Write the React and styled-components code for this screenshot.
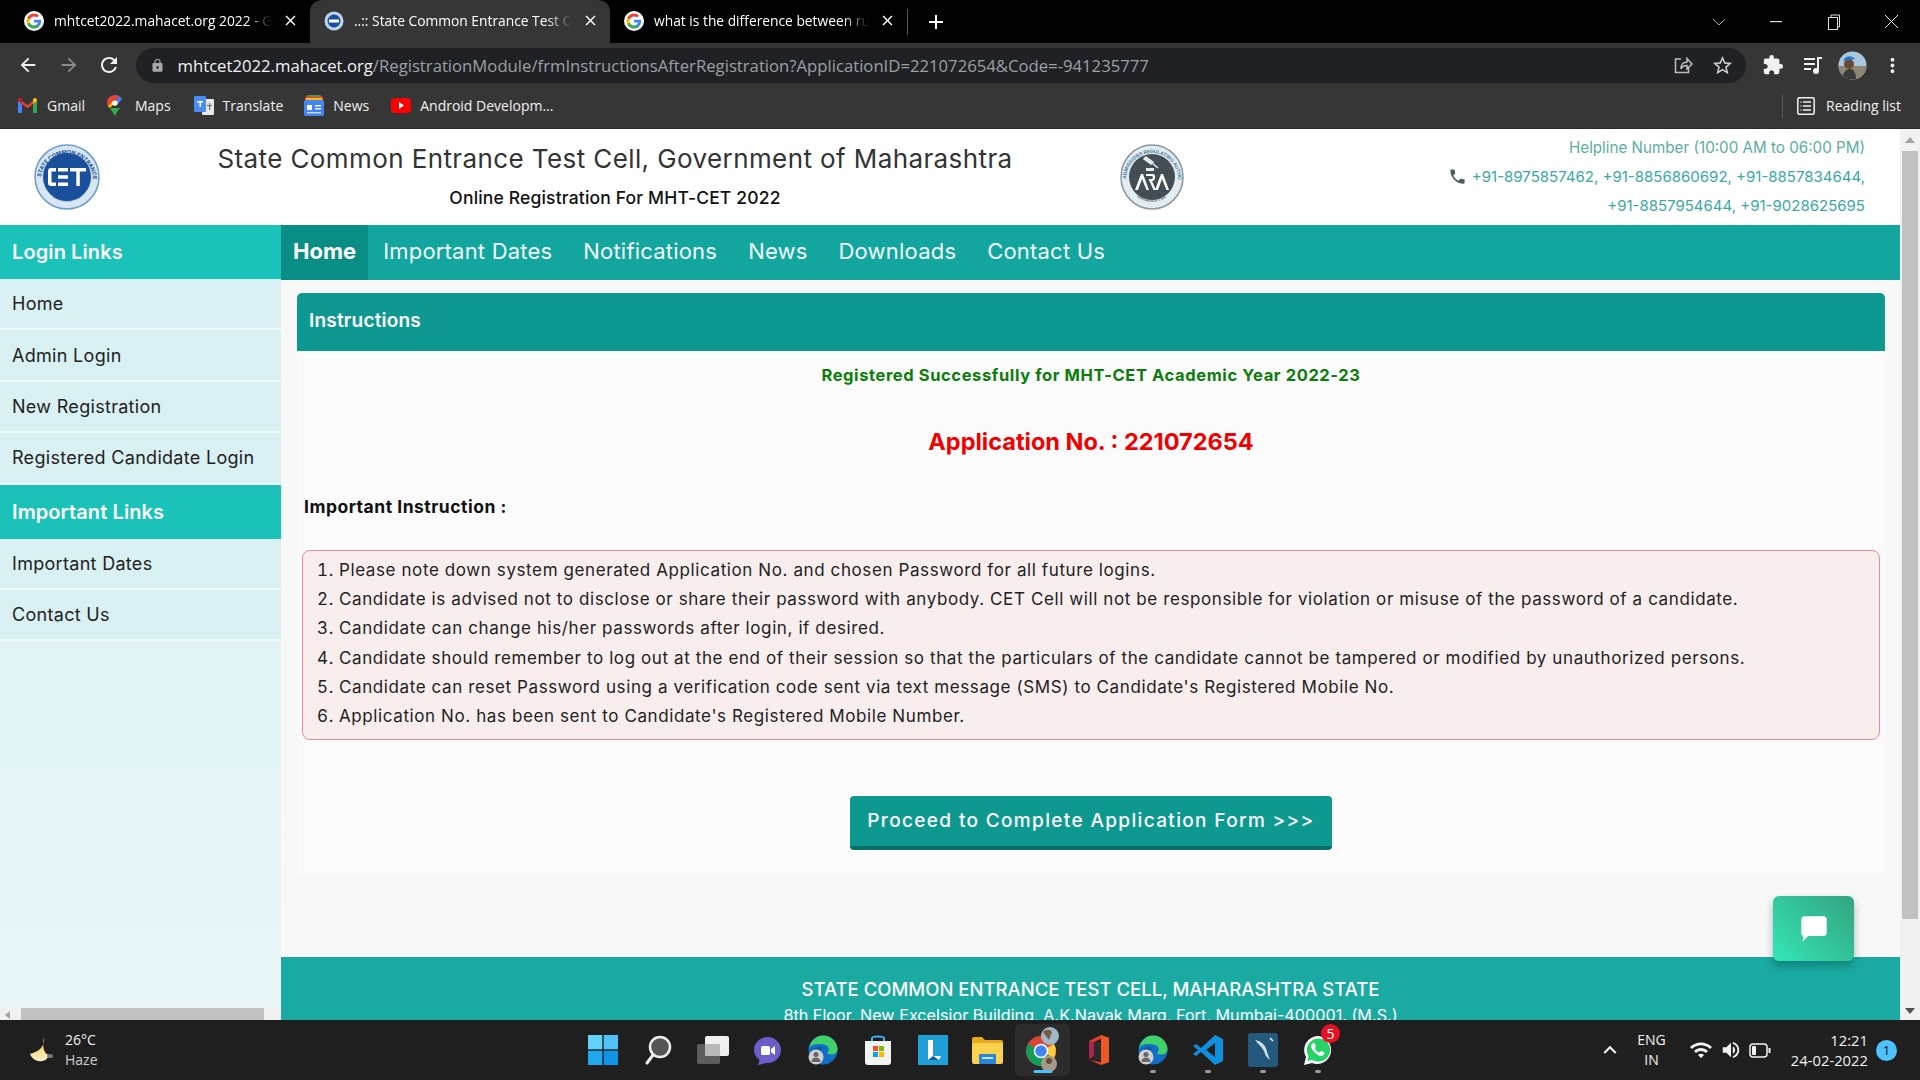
import React from "react";
import styled, { createGlobalStyle } from "styled-components";
import {
  MdArrowBack, MdArrowForward, MdRefresh, MdLock, MdStarBorder, MdMoreVert, MdExtension,
  MdClose, MdAdd, MdLocalPhone, MdWifi, MdVolumeUp, MdKeyboardArrowUp,
} from "react-icons/md";

const Global = createGlobalStyle`
  html, body { margin: 0; padding: 0; width: 1920px; height: 1080px; overflow: hidden; background: #000; }
  * { box-sizing: border-box; }
  svg { display: block; flex: none; }
`;
const ui = `"Open Sans", "Noto Sans", sans-serif`;
const web = `Inter, "Noto Sans", sans-serif`;

const Screen = styled.div`width:1920px;height:1080px;display:flex;flex-direction:column;overflow:hidden;position:relative;`;

/* browser chrome */
const TabStrip = styled.div`height:43px;background:#000;display:flex;align-items:stretch;padding-left:10px;flex:none;position:relative;`;
const Tab = styled.div`
  width:${p => p.$w || 300}px;display:flex;align-items:center;padding:0 11px 2px 14px;gap:10px;color:#fff;
  background:${p => p.$active ? "#363636" : "transparent"};border-radius:12px 12px 0 0;
  font:400 13.8px ${ui};
`;
const TabTitle = styled.span`
  flex:1;white-space:nowrap;overflow:hidden;
  -webkit-mask-image:linear-gradient(90deg,#000 88%,transparent 100%);mask-image:linear-gradient(90deg,#000 88%,transparent 100%);
`;
const TabSep = styled.div`width:1px;height:26px;background:#555;align-self:center;`;
const NewTab = styled.div`width:56px;display:flex;align-items:center;justify-content:center;color:#fff;`;
const WinControls = styled.div`margin-left:auto;display:flex;align-items:center;color:#ddd;`;
const WinBtn = styled.div`width:57.5px;height:36px;display:flex;align-items:center;justify-content:center;`;

const Toolbar = styled.div`height:44px;background:#363636;display:flex;align-items:center;flex:none;padding-left:8px;`;
const NavIcon = styled.div`width:40.5px;display:flex;justify-content:center;color:${p => p.$dim ? "#8a8a8a" : "#f1f1f1"};`;
const UrlBar = styled.div`
  margin-left:6px;width:1610px;height:35px;background:#202124;border-radius:18px;display:flex;align-items:center;padding:0 3px 0 14px;
  font:400 16.7px ${ui};color:#9aa0a6;
`;
const LockWrap = styled.div`color:#a8a8a8;margin-right:13px;`;
const Host = styled.span`color:#f1f3f4;`;
const UrlRest = styled.span`flex:1;white-space:nowrap;`;
const UrlAct = styled.div`width:40px;display:flex;justify-content:center;color:#cfcfcf;`;
const ToolRight = styled.div`display:flex;align-items:center;color:#f1f1f1;padding-left:7px;`;
const ToolIcon = styled.div`width:40px;display:flex;justify-content:center;`;

const Bookmarks = styled.div`height:42px;background:#363636;border-bottom:1px solid #2a2a2a;display:flex;align-items:center;flex:none;padding:0 0 4px 18px;font:400 14px ${ui};color:#f1f1f1;`;
const Mark = styled.div`display:flex;align-items:center;gap:${p => p.$gap}px;margin-right:${p => p.$mr || 0}px;white-space:nowrap;`;
const Reading = styled.div`margin-left:auto;display:flex;align-items:center;gap:11px;border-left:1px solid #5a5a5a;height:24px;padding:0 19px 0 14px;`;

/* page */
const Viewport = styled.div`flex:1;min-height:0;display:flex;background:#fff;`;
const Page = styled.div`flex:1;min-width:0;display:flex;flex-direction:column;`;
const Header = styled.header`height:96px;background:#fff;display:flex;align-items:center;flex:none;padding-left:34px;`;
const TitleBlock = styled.div`width:1010px;margin-left:10px;text-align:center;`;
const Title = styled.div`font:400 26px/1 ${web};letter-spacing:.4px;color:#333;margin-top:-1px;`;
const SubTitle = styled.div`font:500 17.5px/1 ${web};letter-spacing:.17px;color:#111;margin-top:17px;`;
const Help = styled.div`flex:1;text-align:right;padding-right:35px;font:400 15px/29px ${web};color:#3aa9a1;margin-top:-2px;`;
const HelpHead = styled.div`color:#5aaea0;font-size:15.2px;`;
const PhoneIcon = styled(MdLocalPhone)`display:inline-block;vertical-align:-4px;color:#4d5b60;margin-right:5px;`;

const Body = styled.div`flex:1;min-height:0;display:flex;`;
const Sidebar = styled.aside`width:281px;flex:none;background:linear-gradient(#d9f1f2,#e9f6f7);display:flex;flex-direction:column;`;
const SideHead = styled.div`height:54px;background:#1bc2b9;color:#fff;font:600 20px ${web};letter-spacing:.1px;display:flex;align-items:center;padding-left:12px;flex:none;`;
const SideItem = styled.div`height:51.4px;background:#d9f1f2;border-bottom:2px solid #f1fafa;color:#222;font:400 18px ${web};letter-spacing:.3px;display:flex;align-items:center;padding-left:12px;flex:none;`;
const HScroll = styled.div`margin-top:auto;height:12px;background:#f1f1f1;padding-left:21px;padding-right:17px;display:flex;position:relative;`;
const HThumb = styled.div`flex:1;background:#c1c1c1;`;
const HArrow = styled.div`position:absolute;left:5px;top:3px;border:4px solid transparent;border-left:0;border-right:5px solid #a3a3a3;`;

const Main = styled.main`flex:1;min-width:0;display:flex;flex-direction:column;background:#f8f8f8;overflow:hidden;`;
const Nav = styled.nav`height:55px;background:#13a69e;display:flex;flex:none;color:#f4fdfc;font:400 22px ${web};letter-spacing:.2px;`;
const NavItem = styled.div`
  display:flex;align-items:center;padding:0 ${p => p.$active ? 12 : 0}px 3px;margin-right:${p => p.$mr}px;
  ${p => p.$active && "background:#088e85;font-weight:700;color:#fff;letter-spacing:0;"}
`;
const Content = styled.div`height:677px;flex:none;padding:13px 15px 0 16px;`;
const Panel = styled.section`background:#fbfbfb;height:581px;border-radius:5px 5px 0 0;`;
const PanelHead = styled.div`height:58px;background:#0d9990;color:#fff;font:600 19px ${web};letter-spacing:.2px;display:flex;align-items:center;padding:0 0 3px 12px;border-radius:5px 5px 0 0;`;
const Success = styled.div`text-align:center;color:#0b7d0b;font:700 16.5px ${web};letter-spacing:.6px;margin-top:14px;line-height:20px;`;
const AppNo = styled.div`text-align:center;color:#f00000;font:700 23.5px ${web};margin-top:42px;line-height:30px;`;
const ImpHead = styled.div`color:#111;font:700 17.5px ${web};letter-spacing:.5px;margin:40px 0 0 7px;line-height:20px;`;
const Alert = styled.ol`
  margin:33px 5px 0 5px;padding:5px 0 0 36px;height:190px;border:1px solid #f08a96;border-radius:8px;background:#f8eeee;
  color:#222;font:400 17px/29.2px ${web};letter-spacing:.6px;
`;
const BtnRow = styled.div`display:flex;justify-content:center;margin-top:56px;`;
const Btn = styled.button`
  width:482px;height:54px;border:0;border-bottom:4px solid #086e67;border-radius:4px;background:#0d9990;color:#fff;
  font:500 19px ${web};letter-spacing:1.35px;padding:0 0 2px;
`;
const Footer = styled.footer`flex:1;background:#1aaaa2;color:#fff;text-align:center;overflow:hidden;padding-top:20px;`;
const FootTitle = styled.div`font:500 18.5px/24px ${web};`;
const FootAddr = styled.div`font:400 16.2px/24px ${web};margin-top:2px;`;

const Chat = styled.div`
  position:absolute;left:1773px;top:896px;width:81px;height:65px;border-radius:6px;
  background:linear-gradient(45deg,#33e6b4,#34a382);box-shadow:0 5px 9px rgba(0,60,50,.35);
  display:flex;align-items:center;justify-content:center;
`;
const VScroll = styled.div`width:20px;flex:none;background:#f1f1f1;display:flex;flex-direction:column;align-items:center;`;
const VArrow = styled.div`height:22px;display:flex;align-items:center;justify-content:center;flex:none;${p => p.$end && "margin-top:auto;height:18px;"}`;
const VThumb = styled.div`width:16px;height:768px;background:#c1c1c1;flex:none;`;
const UpTri = styled.div`border:5px solid transparent;border-top:0;border-bottom:6px solid #a3a3a3;`;
const DownTri = styled.div`border:5px solid transparent;border-bottom:0;border-top:6px solid #505050;`;

/* taskbar */
const Taskbar = styled.div`height:60px;background:#1f1f1f;flex:none;display:grid;grid-template-columns:1fr auto 1fr;align-items:center;color:#f2f2f2;font:400 14px ${ui};`;
const Weather = styled.div`display:flex;align-items:center;gap:10px;padding-left:27px;`;
const WeatherText = styled.div`line-height:20px;font-size:14px;`;
const HazeLine = styled.div`color:#cfcfcf;`;
const Dock = styled.div`display:flex;align-items:center;`;
const DockItem = styled.div`
  width:55px;height:52px;display:flex;align-items:center;justify-content:center;position:relative;
  ${p => p.$active && "background:#2c2c2c;border-radius:5px;"}
`;
const Dot = styled.div`position:absolute;bottom:3px;left:50%;transform:translateX(-50%);height:3.5px;border-radius:2px;width:${p => p.$active ? 19 : 6}px;background:${p => p.$active ? "#4cc2ff" : "#9a9a9a"};`;
const Badge = styled.div`position:absolute;right:5px;top:0;width:19px;height:19px;border-radius:50%;background:#e81123;color:#fff;font:400 14px/19px ${ui};text-align:center;`;
const Tray = styled.div`display:flex;align-items:center;justify-content:flex-end;padding-right:23px;`;
const Lang = styled.div`text-align:center;line-height:20px;margin:0 23px 0 14px;font-size:14px;`;
const TrayIcons = styled.div`display:flex;align-items:center;gap:7px;margin-right:20px;`;
const Clock = styled.div`text-align:right;line-height:20px;font-size:14.8px;`;
const Notif = styled.div`width:21px;height:21px;border-radius:50%;background:#4cc2ff;color:#111;margin-left:8px;text-align:center;font:400 13px/21px ${ui};`;

/* drawn logos */
const G = () => (
  <svg width="20" height="20" viewBox="0 0 48 48">
    <circle cx="24" cy="24" r="24" fill="#fff"/>
    <path fill="#4285F4" d="M41 24.5c0-1.3-.1-2.300-.3-3.500H24v6.500h9.700c-.4 2.200-1.700 4.100-3.600 5.300v4.400h5.800c3.400-3.100 5.100-7.600 5.100-12.700z"/>
    <path fill="#34A853" d="M24 42c4.900 0 8.900-1.600 11.900-4.400l-5.800-4.400c-1.600 1.100-3.700 1.700-6.100 1.700-4.700 0-8.700-3.200-10.100-7.400H7.900v4.600C10.900 37.900 17 42 24 42z"/>
    <path fill="#FBBC05" d="M13.900 27.500c-.4-1.100-.6-2.300-.6-3.500s.2-2.400.6-3.500v-4.600h-6C6.700 18.300 6 21.100 6 24s.7 5.700 1.900 8.100l6-4.600z"/>
    <path fill="#EA4335" d="M24 13.100c2.600 0 5 .9 6.800 2.700l5.100-5.100C32.900 7.900 28.900 6 24 6 17 6 10.900 10.100 7.900 15.900l6 4.600c1.400-4.200 5.400-7.400 10.100-7.400z"/>
  </svg>
);
const CetFav = () => (
  <svg width="20" height="20" viewBox="0 0 20 20">
    <circle cx="10" cy="10" r="9.500" fill="#bcd4ec"/><circle cx="10" cy="10" r="6.500" fill="#1a4f9c"/><rect x="5" y="8.500" width="10" height="3" fill="#fff"/>
  </svg>
);
const CetLogo = () => (
  <svg width="66" height="66" viewBox="0 0 66 66">
    <defs><path id="cetArc" d="M7 36a26 26 0 1 1 52 0"/><path id="cetBot" d="M14 49a25 25 0 0 0 38 0"/></defs>
    <circle cx="33" cy="33" r="32" fill="#d6e6f3" stroke="#6d9cc8" strokeWidth="1.500"/>
    <circle cx="33" cy="33" r="24" fill="#1a4f9c"/>
    <text fill="#1a4f9c" fontSize="5.500" fontWeight="700" fontFamily="Inter"><textPath href="#cetArc" startOffset="3">STATE COMMON ENTRANCE TEST CELL</textPath></text>
    <text fill="#1a4f9c" fontSize="4" fontFamily="Inter"><textPath href="#cetBot" startOffset="6">MAHARASHTRA</textPath></text>
    <path d="M22 24h-5a3 3 0 0 0-3 3v12a3 3 0 0 0 3 3h5v-3.500h-4.500v-11H22zM24 24h10v3.500H24zM24 31.300h10v3.400H24zM24 38.500h10V42H24zM36 24h16v3.500h-6.200V42h-3.500V27.500H36z" fill="#fff"/>
  </svg>
);
const AraLogo = () => (
  <svg width="64" height="66" viewBox="0 0 64 66">
    <defs><path id="araArc" d="M6 36a26 27 0 1 1 52 0"/><path id="araBot" d="M14 50a24 24 0 0 0 36 0"/></defs>
    <ellipse cx="32" cy="33" rx="31" ry="32" fill="#e3ecf1" stroke="#8a979e" strokeWidth="1.500"/>
    <circle cx="32" cy="33" r="23" fill="#434e55"/>
    <text fill="#4a7ea4" fontSize="4.800" fontWeight="700" fontFamily="Inter"><textPath href="#araArc" startOffset="1">ADMISSIONS REGULATING AUTHORITY</textPath></text>
    <text fill="#434e55" fontSize="4" fontFamily="Inter"><textPath href="#araBot" startOffset="4">MAHARASHTRA</textPath></text>
    <path d="M26 13l7 5-2 2-7-5zM31 18l7 6" stroke="#e3ecf1" strokeWidth="1.500" fill="#e3ecf1"/><rect x="26" y="24" width="8" height="3" fill="#e3ecf1"/>
    <path d="M15 46l6-16h2l6 16h-2.500L22 35l-4 11zM35 46l6-16h2l6 16h-2.500L42 35l-4 11z" fill="#fff"/><path d="M26 30h7c3 0 3 7-1 7l4 9h-2.500l-4-9H29v-2h3c1 0 1-3 0-3h-6z" fill="#fff"/>
  </svg>
);
const Gmail = () => (
  <svg width="19" height="15" viewBox="0 0 19 15">
    <path fill="#4285F4" d="M0 2v12a1 1 0 0 0 1 1h3V6z"/><path fill="#34A853" d="M19 2v12a1 1 0 0 1-1 1h-3V6z"/>
    <path fill="#EA4335" d="M4 6v-3l5.500 4.200L15 3v3l-5.500 4.200z"/><path fill="#C5221F" d="M0 2c0-1.800 2-2.500 3.200-1.600L4 1v5L0 3z"/><path fill="#FBBC05" d="M19 2c0-1.800-2-2.500-3.200-1.600L15 1v5l4-3z"/>
  </svg>
);
const MapsI = () => (
  <svg width="16" height="21" viewBox="0 0 16 21">
    <path fill="#34A853" d="M3 13l5 8c1-3 3-5 5-8z"/><path fill="#4285F4" d="M8 0c3 0 5 1.500 7 4l-4 5z"/><path fill="#EA4335" d="M8 0C4 0 0 3 0 8c0 1 .5 2.500 1 3l5-5c1-1 2-2 5-2l1-2z"/><path fill="#FBBC05" d="M1 11c.5 1 1 1.500 2 2l5-5-2-2z"/><circle cx="8" cy="8" r="2.700" fill="#fff"/>
  </svg>
);
const TranslateI = () => (
  <svg width="20" height="20" viewBox="0 0 20 20">
    <rect x="8" y="3" width="12" height="16" fill="#e8e8e8" rx="1"/><rect x="0" y="0" width="12" height="16" fill="#4a8af4" rx="1"/>
    <rect x="3" y="5" width="6" height="1.600" fill="#fff"/><rect x="5.500" y="5" width="1.500" height="6" fill="#fff"/><rect x="13" y="9" width="5" height="1.200" fill="#777"/><rect x="15" y="7" width="1.200" height="7" fill="#777"/>
  </svg>
);
const NewsI = () => (
  <svg width="20" height="21" viewBox="0 0 20 21">
    <rect x="3" y="0" width="14" height="6" fill="#34A853" rx="1"/><rect x="1" y="1.500" width="18" height="6" fill="#EA4335" rx="1"/><rect x="2" y="3" width="16" height="5" fill="#FBBC05"/>
    <rect x="0" y="5" width="20" height="16" fill="#4285F4" rx="1.500"/><rect x="3" y="10" width="5" height="5" fill="#fff"/><rect x="11" y="10" width="6" height="1.400" fill="#fff"/><rect x="11" y="13" width="6" height="1.400" fill="#fff"/><rect x="3" y="17" width="14" height="1.400" fill="#cfe0fb"/>
  </svg>
);
const YT = () => (
  <svg width="20" height="15" viewBox="0 0 20 15"><rect width="20" height="15" rx="4" fill="#f00"/><path d="M8 4l5 3.500-5 3.500z" fill="#fff"/></svg>
);
const ReadI = () => (
  <svg width="18" height="18" viewBox="0 0 18 18" fill="none" stroke="#f1f1f1" strokeWidth="1.500">
    <rect x=".8" y=".8" width="16.400" height="16.400" rx="1.500"/><path d="M6 5h8M6 9h8M6 13h8M3.500 5h1M3.500 9h1M3.500 13h1"/>
  </svg>
);
const ShareI = () => (
  <svg width="20" height="20" viewBox="0 0 20 20" fill="none" stroke="#bdbdbd" strokeWidth="1.500">
    <path d="M8 4H2.500v13.500h13V13"/><path d="M8 14c0-5 3-7 6-7V3.500l5 5.500-5 5v-3.500c-3 0-5 1-6 3.500z"/>
  </svg>
);
const MediaI = () => (
  <svg width="20" height="20" viewBox="0 0 20 20" fill="#f1f1f1">
    <rect x="1" y="3" width="11" height="2"/><rect x="1" y="8" width="11" height="2"/><rect x="1" y="13" width="7" height="2"/><rect x="14" y="2" width="2" height="13"/><rect x="14" y="2" width="5" height="2"/><circle cx="13" cy="16" r="3"/>
  </svg>
);
const Avatar = () => (
  <svg width="29" height="29" viewBox="0 0 29 29">
    <clipPath id="avc"><circle cx="14.500" cy="14.500" r="14"/></clipPath>
    <g clipPath="url(#avc)"><rect width="29" height="29" fill="#a9c8de"/><rect y="15" width="29" height="14" fill="#8d8672"/><circle cx="11" cy="13" r="5" fill="#6a4a35"/><path d="M5 10c2-6 9-6 12-2z" fill="#2a78c4"/><path d="M4 29c0-7 4-11 8-11s6 4 6 11z" fill="#3a3a3a"/></g>
  </svg>
);
const MoonI = () => (
  <svg width="28" height="28" viewBox="0 0 28 28">
    <defs><linearGradient id="moon" x1="0" y1="0" x2="0" y2="1"><stop offset="0" stopColor="#f5c33c"/><stop offset="1" stopColor="#fff2c8"/></linearGradient></defs>
    <path d="M17 1c1 8-3 14-14 17 2 5 7 8 12 7 4-.5 6-3 7-6-5-1-7-8-5-18z" fill="url(#moon)"/><ellipse cx="23" cy="20" rx="3" ry="2" fill="#777"/>
  </svg>
);
const Win = () => (
  <svg width="30" height="30" viewBox="0 0 30 30"><rect width="14.300" height="14.300" fill="#62d2f8"/><rect x="15.700" width="14.300" height="14.300" fill="#4fc3f7"/><rect y="15.700" width="14.300" height="14.300" fill="#1fa8ee"/><rect x="15.700" y="15.700" width="14.300" height="14.300" fill="#0f95e6"/></svg>
);
const SearchI = () => (
  <svg width="30" height="30" viewBox="0 0 30 30" fill="none"><circle cx="17" cy="12" r="10" fill="#555" stroke="#eee" strokeWidth="2.500"/><path d="M10 20l-6 8" stroke="#eee" strokeWidth="3" strokeLinecap="round"/></svg>
);
const TaskView = () => (
  <svg width="32" height="28" viewBox="0 0 32 28"><rect y="8" width="23" height="20" rx="2" fill="#5d5d5d"/><rect x="8" width="24" height="20" rx="2" fill="#f0f0f0"/><rect x="8" y="8" width="15" height="12" fill="#b8b8b8"/></svg>
);
const Teams = () => (
  <svg width="29" height="29" viewBox="0 0 29 29"><path d="M14.500 1C22 1 28 7 28 14s-6 13-13.500 13c-3 0-7 2-10 2 1-1.500 2-3 2-5C3 21 1 18 1 14 1 7 7 1 14.500 1z" fill="#6a5fc9"/><rect x="8" y="10" width="9" height="9" rx="1.500" fill="#fff"/><path d="M18 13l4-3v9l-4-3z" fill="#fff"/></svg>
);
const Edge = () => (
  <svg width="30" height="30" viewBox="0 0 30 30">
    <circle cx="15" cy="15" r="14.500" fill="#1070c8"/><path d="M1 13C3 5 9 .5 15 .5c8 0 14 6 14.500 13 .2 4-3 6-6.500 6-2 0-4-1-4-2 3-1 3-7-3.500-8C9 8.500 4 9 1 13z" fill="#42d06a"/><path d="M12 29c-5-1-9-5-10-10 2-6 9-9 14-6-5 0-7 8-4 16z" fill="#0c59a4"/>
    <circle cx="8" cy="22" r="7.500" fill="#cfcfcf"/><circle cx="8" cy="19.500" r="2.500" fill="#666"/><path d="M3.500 27c0-3 2-4.500 4.500-4.500s4.500 1.500 4.500 4.500z" fill="#666"/>
  </svg>
);
const Store = () => (
  <svg width="28" height="30" viewBox="0 0 28 30"><path d="M8 7V3c0-2 12-2 12 0v4" fill="none" stroke="#3ab4f2" strokeWidth="2"/><path d="M1 6h26v21a3 3 0 0 1-3 3H4a3 3 0 0 1-3-3z" fill="#f3f3f3"/><rect x="9" y="11" width="5" height="5" fill="#f25022"/><rect x="15" y="11" width="5" height="5" fill="#7fba00"/><rect x="9" y="17" width="5" height="5" fill="#00a4ef"/><rect x="15" y="17" width="5" height="5" fill="#ffb900"/></svg>
);
const LApp = () => (
  <svg width="30" height="30" viewBox="0 0 30 30"><rect width="30" height="30" fill="#1e9fd8"/><path d="M10 5h5v16h8l-2 4H10z" fill="#fff"/><path d="M15 21l6 4H10z" fill="#0c5f9c"/></svg>
);
const Folder = () => (
  <svg width="31" height="28" viewBox="0 0 31 28"><path d="M0 3a2 2 0 0 1 2-2h8l3 3h16a2 2 0 0 1 2 2v4H0z" fill="#e8a91a"/><rect y="7" width="31" height="21" rx="2" fill="#fbd24e"/><rect x="7" y="18" width="17" height="10" rx="1" fill="#2a86d8"/><rect x="10" y="21" width="11" height="2" fill="#c8e4fb"/></svg>
);
const ChromeStack = () => (
  <svg width="34" height="46" viewBox="0 0 34 46">
    <circle cx="15" cy="24" r="15" fill="#db4437"/><path d="M15 24l13 7a15 15 0 0 1-13 8 15 15 0 0 1-13-8z" fill="#0f9d58"/><path d="M15 24l-13 7a15 15 0 0 1 0-14z" fill="#0f9d58"/><path d="M15 24l13-7a15 15 0 0 1 0 14z" fill="#ffcd40"/><circle cx="15" cy="24" r="6.500" fill="#4285f4" stroke="#fff" strokeWidth="1.500"/>
    <circle cx="24" cy="9" r="9" fill="#9fb8c6"/><path d="M17 5c3-3 7-3 9 0l-3 8z" fill="#7a5a40"/><circle cx="23" cy="37" r="8" fill="#a59a85"/><circle cx="23" cy="34" r="3" fill="#6a4a35"/>
  </svg>
);
const Office = () => (
  <svg width="24" height="30" viewBox="0 0 24 30"><path d="M3 6l12-6 8 3v24l-8 3-12-5 12 2V4L8 7v14l-5 3z" fill="#d83b2b"/><path d="M3 6l5 1v14l-5 3z" fill="#a9254d"/><path d="M15 0l8 3v24l-8 3z" fill="#eb5a24"/><rect x="8" y="7" width="7" height="18" fill="#2a2a2a"/></svg>
);
const VSCode = () => (
  <svg width="30" height="30" viewBox="0 0 30 30"><path d="M22 0l8 4v22l-8 4L8 17l-5 4-3-2 5-4-5-4 3-2 5 4z" fill="#0f8fe0"/><path d="M22 8v14l-9-7z" fill="#1f1f1f"/></svg>
);
const MySql = () => (
  <svg width="30" height="34" viewBox="0 0 30 34"><rect width="30" height="34" rx="3" fill="#24597e"/><path d="M7 7c6 1 11 5 12 12l3 8c-3-2-5-5-6-9-2-4-6-7-9-11z" fill="#cfdfe9"/><path d="M22 5l3 3" stroke="#fff" strokeWidth="1.500"/></svg>
);
const WhatsApp = () => (
  <svg width="30" height="32" viewBox="0 0 30 32"><path d="M15 2a14 14 0 0 0-12 21L1 31l8-2A14 14 0 1 0 15 2z" fill="#fff"/><path d="M15 4.500A11.500 11.500 0 0 0 5.500 22l-1 5 5-1.300A11.500 11.500 0 1 0 15 4.500z" fill="#25d366"/><path d="M10 9c2-1 3 3 2.500 4-.5.700-1 1 0 2.500 1 1.500 2.500 2.500 3.500 3 1 .3 1.500-1 2-1.500 1-.5 4 1.500 3.500 2.500-1 2.500-4 3-6.500 1.500-3-1.500-6-5-7-8-.2-1.500.5-3.500 2.500-4z" fill="#fff"/></svg>
);
const BatteryI = () => (
  <svg width="22" height="15" viewBox="0 0 22 15" fill="none"><rect x="1" y="1" width="17" height="13" rx="3" stroke="#f2f2f2" strokeWidth="1.500"/><rect x="3" y="3" width="4" height="9" rx="1" fill="#f2f2f2"/><rect x="19.500" y="5" width="2" height="5" fill="#f2f2f2"/></svg>
);
const RestoreI = () => (
  <svg width="14" height="16" viewBox="0 0 14 16" fill="none" stroke="#ddd"><rect x="1.500" y="3.500" width="9" height="12"/><path d="M4 3.500V1h8.500v12H10.500"/></svg>
);
const ThinChevron = () => <svg width="14" height="8" viewBox="0 0 14 8" fill="none" stroke="#aaa"><path d="M1 1l6 6 6-6"/></svg>;
const ThinClose = () => <svg width="15" height="15" viewBox="0 0 15 15" fill="none" stroke="#e4e4e4"><path d="M1 1l13 13M14 1L1 14"/></svg>;
const ChatI = () => (
  <svg width="30" height="30" viewBox="0 0 26 26"><path d="M5 2h16a3 3 0 0 1 3 3v11a3 3 0 0 1-3 3H8l-5 5c.5-2 .8-4 .8-5H4a2 2 0 0 1-2-2V5a3 3 0 0 1 3-3z" fill="#fff"/></svg>
);
const MinI = () => <svg width="12" height="2"><rect width="12" height="1.200" fill="#ddd"/></svg>;

const dock = [
  [Win], [SearchI], [TaskView], [Teams], [Edge], [Store], [LApp], [Folder],
  [ChromeStack, "active"], [Office], [Edge, "dot"], [VSCode, "dot"], [MySql, "dot"], [WhatsApp, "dot", "5"],
];
const navItems = [["Important Dates", 31], ["Notifications", 31], ["News", 31], ["Downloads", 31], ["Contact Us", 0]];
const rules = [
  "Please note down system generated Application No. and chosen Password for all future logins.",
  "Candidate is advised not to disclose or share their password with anybody. CET Cell will not be responsible for violation or misuse of the password of a candidate.",
  "Candidate can change his/her passwords after login, if desired.",
  "Candidate should remember to log out at the end of their session so that the particulars of the candidate cannot be tampered or modified by unauthorized persons.",
  "Candidate can reset Password using a verification code sent via text message (SMS) to Candidate's Registered Mobile No.",
  "Application No. has been sent to Candidate's Registered Mobile Number.",
];

export default function App() {
  return (
    <Screen>
      <Global />
      <TabStrip>
        <Tab><G /><TabTitle>mhtcet2022.mahacet.org 2022 - Google Search</TabTitle><MdClose size={17} /></Tab>
        <Tab $active><CetFav /><TabTitle>..:: State Common Entrance Test Cell</TabTitle><MdClose size={17} /></Tab>
        <Tab $w={297}><G /><TabTitle>what is the difference between runtime</TabTitle><MdClose size={17} /></Tab>
        <TabSep />
        <NewTab><MdAdd size={24} /></NewTab>
        <WinControls>
          <WinBtn><ThinChevron /></WinBtn>
          <WinBtn><MinI /></WinBtn>
          <WinBtn><RestoreI /></WinBtn>
          <WinBtn><ThinClose /></WinBtn>
        </WinControls>
      </TabStrip>
      <Toolbar>
        <NavIcon><MdArrowBack size={22} /></NavIcon>
        <NavIcon $dim><MdArrowForward size={22} /></NavIcon>
        <NavIcon><MdRefresh size={24} /></NavIcon>
        <UrlBar>
          <LockWrap><MdLock size={15} /></LockWrap>
          <UrlRest><Host>mhtcet2022.mahacet.org</Host>/RegistrationModule/frmInstructionsAfterRegistration?ApplicationID=221072654&amp;Code=-941235777</UrlRest>
          <UrlAct><ShareI /></UrlAct>
          <UrlAct><MdStarBorder size={23} /></UrlAct>
        </UrlBar>
        <ToolRight>
          <ToolIcon><MdExtension size={22} /></ToolIcon>
          <ToolIcon><MediaI /></ToolIcon>
          <ToolIcon><Avatar /></ToolIcon>
          <ToolIcon><MdMoreVert size={23} /></ToolIcon>
        </ToolRight>
      </Toolbar>
      <Bookmarks>
        <Mark $gap={10} $mr={22}><Gmail /><span>Gmail</span></Mark>
        <Mark $gap={12} $mr={23}><MapsI /><span>Maps</span></Mark>
        <Mark $gap={9} $mr={21}><TranslateI /><span>Translate</span></Mark>
        <Mark $gap={9} $mr={22}><NewsI /><span>News</span></Mark>
        <Mark $gap={9}><YT /><span>Android Developm...</span></Mark>
        <Reading><ReadI /><span>Reading list</span></Reading>
      </Bookmarks>
      <Viewport>
        <Page>
          <Header>
            <CetLogo />
            <TitleBlock>
              <Title>State Common Entrance Test Cell, Government of Maharashtra</Title>
              <SubTitle>Online Registration For MHT-CET 2022</SubTitle>
            </TitleBlock>
            <AraLogo />
            <Help>
              <HelpHead>Helpline Number (10:00 AM to 06:00 PM)</HelpHead>
              <div><PhoneIcon size={19} />+91-8975857462, +91-8856860692, +91-8857834644,</div>
              <div>+91-8857954644, +91-9028625695</div>
            </Help>
          </Header>
          <Body>
            <Sidebar>
              <SideHead>Login Links</SideHead>
              <SideItem>Home</SideItem>
              <SideItem>Admin Login</SideItem>
              <SideItem>New Registration</SideItem>
              <SideItem>Registered Candidate Login</SideItem>
              <SideHead>Important Links</SideHead>
              <SideItem>Important Dates</SideItem>
              <SideItem>Contact Us</SideItem>
              <HScroll><HArrow /><HThumb /></HScroll>
            </Sidebar>
            <Main>
              <Nav>
                <NavItem $active $mr={15}>Home</NavItem>
                {navItems.map(([t, m]) => <NavItem key={t} $mr={m}>{t}</NavItem>)}
              </Nav>
              <Content>
                <Panel>
                  <PanelHead>Instructions</PanelHead>
                  <Success>Registered Successfully for MHT-CET Academic Year 2022-23</Success>
                  <AppNo>Application No. : 221072654</AppNo>
                  <ImpHead>Important Instruction :</ImpHead>
                  <Alert>{rules.map(r => <li key={r}>{r}</li>)}</Alert>
                  <BtnRow><Btn>Proceed to Complete Application Form &gt;&gt;&gt;</Btn></BtnRow>
                </Panel>
              </Content>
              <Footer>
                <FootTitle>STATE COMMON ENTRANCE TEST CELL, MAHARASHTRA STATE</FootTitle>
                <FootAddr>8th Floor, New Excelsior Building, A.K.Nayak Marg, Fort, Mumbai-400001. (M.S.)</FootAddr>
              </Footer>
            </Main>
          </Body>
        </Page>
        <VScroll>
          <VArrow><UpTri /></VArrow>
          <VThumb />
          <VArrow $end><DownTri /></VArrow>
        </VScroll>
      </Viewport>
      <Chat><ChatI /></Chat>
      <Taskbar>
        <Weather>
          <MoonI />
          <WeatherText><div>26°C</div><HazeLine>Haze</HazeLine></WeatherText>
        </Weather>
        <Dock>
          {dock.map(([Icon, state, badge], i) => (
            <DockItem key={i} $active={state === "active"}>
              <Icon />
              {state && <Dot $active={state === "active"} />}
              {badge && <Badge>{badge}</Badge>}
            </DockItem>
          ))}
        </Dock>
        <Tray>
          <MdKeyboardArrowUp size={26} />
          <Lang>ENG<br />IN</Lang>
          <TrayIcons><MdWifi size={24} /><MdVolumeUp size={22} /><BatteryI /></TrayIcons>
          <Clock>12:21<br />24-02-2022</Clock>
          <Notif>1</Notif>
        </Tray>
      </Taskbar>
    </Screen>
  );
}
